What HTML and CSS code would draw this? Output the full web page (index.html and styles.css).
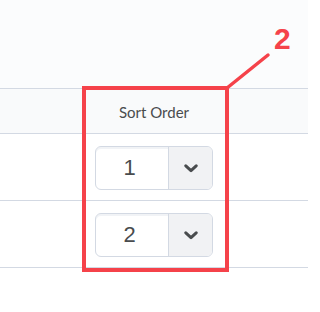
FILE: index.html
```html
<!DOCTYPE html>
<html>
<head>
<meta charset="utf-8">
<link rel="stylesheet" href="styles.css">
</head>
<body>
<div class="page">
  <div class="top"></div>
  <div class="table">
    <div class="row header">
      <div class="cell"></div>
      <div class="cell sort-head">Sort Order</div>
      <div class="cell"></div>
    </div>
    <div class="row">
      <div class="cell"></div>
      <div class="cell sort-cell">
        <div class="select"><span class="value">1</span><span class="arrow"><svg width="14" height="9" viewBox="0 0 14 9"><path d="M1.8 1.8 L7 6.6 L12.2 1.8" fill="none" stroke="#494c4e" stroke-width="3" stroke-linecap="round" stroke-linejoin="round"/></svg></span></div>
      </div>
      <div class="cell"></div>
    </div>
    <div class="row">
      <div class="cell"></div>
      <div class="cell sort-cell">
        <div class="select"><span class="value">2</span><span class="arrow"><svg width="14" height="9" viewBox="0 0 14 9"><path d="M1.8 1.8 L7 6.6 L12.2 1.8" fill="none" stroke="#494c4e" stroke-width="3" stroke-linecap="round" stroke-linejoin="round"/></svg></span></div>
      </div>
      <div class="cell"></div>
    </div>
  </div>
  <div class="callout-box"></div>
  <svg class="callout-line" width="308" height="312" viewBox="0 0 308 312"><line x1="227" y1="88" x2="268" y2="55" stroke="#f5424a" stroke-width="3.5" stroke-linecap="round"/></svg>
  <div class="callout-num">2</div>
</div>
</body>
</html>
```
FILE: styles.css
```css
html, body {
  margin: 0;
  padding: 0;
  background: #ffffff;
}
.page {
  position: relative;
  width: 308px;
  height: 312px;
  overflow: hidden;
  font-family: Lato, "Liberation Sans", sans-serif;
  color: #494c4e;
}
.top {
  height: 89px;
  background: #fbfcfd;
  border-bottom: 1px solid #d3d9e3;
  box-sizing: border-box;
}
.row {
  display: grid;
  grid-template-columns: 82px 144px 1fr;
  border-bottom: 1px solid #d3d9e3;
  height: 67px;
  box-sizing: border-box;
}
.row.header {
  height: 45px;
  background: #f9fafb;
}
.sort-head {
  display: flex;
  align-items: center;
  justify-content: center;
  font-size: 15px;
  padding-top: 1px;
}
.sort-cell {
  display: flex;
  align-items: flex-start;
  justify-content: center;
  padding-top: 12px;
  box-sizing: border-box;
}
.select {
  display: flex;
  width: 118px;
  height: 44px;
  border: 1px solid #d3d9e3;
  border-radius: 6px;
  box-sizing: border-box;
  overflow: hidden;
  background: #ffffff;
  box-shadow: inset 0 2px 0 0 rgba(185, 194, 208, 0.2);
}
.value {
  width: 73px;
  padding-right: 5px;
  box-sizing: border-box;
  display: flex;
  align-items: center;
  justify-content: center;
  font-family: "Liberation Sans", Arial, sans-serif;
  font-size: 22px;
  color: #494c4e;
  border-right: 1px solid #d3d9e3;
}
.arrow {
  flex: 1;
  display: flex;
  align-items: center;
  justify-content: center;
  background: #f1f2f4;
}
.callout-box {
  position: absolute;
  left: 82px;
  top: 86px;
  width: 147px;
  height: 186px;
  border: 4px solid #f5424a;
  box-sizing: border-box;
}
.callout-line {
  position: absolute;
  left: 0;
  top: 0;
}
.callout-num {
  position: absolute;
  left: 274px;
  top: 24px;
  font-family: "Liberation Sans", Arial, sans-serif;
  font-weight: bold;
  font-size: 30px;
  line-height: 30px;
  color: #f5424a;
}
```
